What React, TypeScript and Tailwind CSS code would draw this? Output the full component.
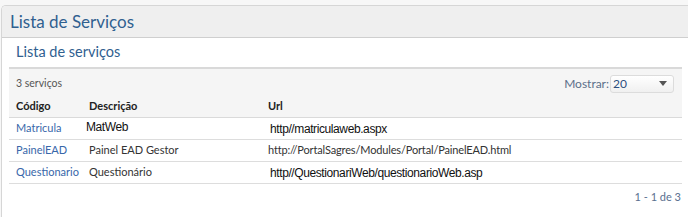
import React from "react";

const rows = [
  {
    code: "Matricula",
    desc: "MatWeb",
    url: "http//matriculaweb.aspx",
    descAlt: true,
    urlAlt: true,
  },
  {
    code: "PainelEAD",
    desc: "Painel EAD Gestor",
    url: "http://PortalSagres/Modules/Portal/PainelEAD.html",
    descAlt: false,
    urlAlt: false,
  },
  {
    code: "Questionario",
    desc: "Questionário",
    url: "http//QuestionariWeb/questionarioWeb.asp",
    descAlt: false,
    urlAlt: true,
  },
];

const alt = { fontFamily: '"Liberation Sans", Arial, sans-serif' };

export default function App() {
  return (
    <div
      className="w-[688px] h-[217px] overflow-hidden bg-[#f7f7f7] pt-[5px] pl-[1px]"
      style={{ fontFamily: 'Lato, "Open Sans", sans-serif' }}
    >
      <div className="h-[212px] border-t border-l border-[#d6d6d6] rounded-tl-[5px] bg-white overflow-hidden">
        <div className="h-[32px] bg-[#efefef] border-b border-[#cfcfcf] flex items-center pl-[8px] text-[17px] leading-none text-[#30608f]">
          Lista de Serviços
        </div>
        <div className="pl-[7px] pr-[6px]">
          <div className="h-[29px] flex items-center pl-[7px] text-[14.5px] leading-none text-[#30608f]">
            Lista de serviços
          </div>
          <div className="border-t-2 border-[#d9d9d9] bg-[#f5f5f5]">
            <div className="h-[27px] flex items-center justify-between pl-[7px] pr-[8px] pt-[2px]">
              <span className="text-[10.5px] text-[#555]">3 serviços</span>
              <div className="flex items-center gap-[1px]">
                <span className="text-[12px] text-[#5b6f8a]">Mostrar:</span>
                <div className="w-[64px] h-[18px] rounded-[3px] border border-[#dcdcdc] bg-gradient-to-b from-[#ffffff] to-[#f0f0f0] flex items-center justify-between pl-[2px] pr-[6px]">
                  <span className="text-[12px] text-[#2d4f7f] leading-none">20</span>
                  <svg width="8" height="5" viewBox="0 0 8 5">
                    <path d="M0 0 H8 L4 5 Z" fill="#555" />
                  </svg>
                </div>
              </div>
            </div>
            <div className="h-[22px] flex items-center text-[11px] font-bold text-[#222] border-b border-[#dadada]">
              <div className="w-[73px] pl-[7px]">Código</div>
              <div className="w-[179px] pl-[7px]">Descrição</div>
              <div className="flex-1 pl-[7px]">Url</div>
            </div>
          </div>
          {rows.map((r) => (
            <div
              key={r.code}
              className="h-[22px] flex items-center border-b border-[#dddddd] text-[11px]"
            >
              <div className="w-[73px] pl-[7px] text-[#3867aa] whitespace-nowrap">{r.code}</div>
              <div
                className={
                  r.descAlt
                    ? "w-[179px] pl-[4px] text-[12px] text-[#111] mb-[4px] tracking-[-0.4px]"
                    : "w-[179px] pl-[7px] text-[#333]"
                }
                style={r.descAlt ? alt : undefined}
              >
                {r.desc}
              </div>
              <div
                className={
                  r.urlAlt
                    ? "flex-1 pl-[9px] text-[12px] text-[#111] tracking-[-0.4px]"
                    : "flex-1 pl-[7px] text-[#333] tracking-[-0.15px]"
                }
                style={r.urlAlt ? alt : undefined}
              >
                {r.url}
              </div>
            </div>
          ))}
          <div className="h-[26px] flex items-center justify-end pr-[1px] pt-[1px] text-[11px] text-[#5a7090]">
            1 - 1 de 3
          </div>
        </div>
      </div>
    </div>
  );
}
